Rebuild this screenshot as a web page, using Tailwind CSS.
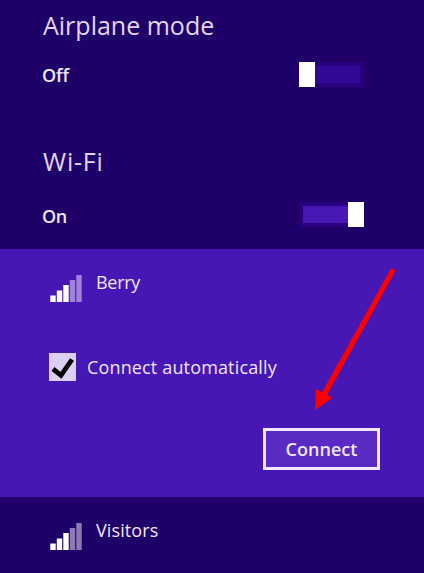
<!DOCTYPE html>
<html lang="en">
<head>
<meta charset="utf-8">
<title>Networks</title>
<script src="https://cdn.jsdelivr.net/npm/@tailwindcss/browser@4"></script>
</head>
<body class="w-[424px] h-[573px] overflow-hidden bg-[#1f0068] text-[#f0e6fc] font-['Open_Sans','Noto_Sans',sans-serif]">
<main class="relative flex flex-col h-[573px] whitespace-nowrap">
  <section class="h-[140px] pt-[7px] pl-[43px] pr-[60px]">
    <h2 class="h-9 leading-9 text-[25px] font-normal text-[#e2d6f2]">Airplane mode</h2>
    <div class="mt-[19px] flex items-center justify-between h-[25px]">
      <span class="pt-0.5 text-[18px] leading-[25px] font-semibold -ml-px tracking-[-0.1px]">Off</span>
      <div class="flex w-[65px] h-[25px] bg-[#280080]"><div class="w-4 h-full bg-white"></div><div class="flex-1 my-1 mr-1 bg-[#310996]"></div></div>
    </div>
  </section>
  <section class="h-[109px] pt-[3px] pl-[43px] pr-[60px]">
    <h2 class="h-9 leading-9 text-[25px] font-normal tracking-[0.8px] text-[#e2d6f2]">Wi-Fi</h2>
    <div class="mt-[23px] flex items-center justify-between h-[25px]">
      <span class="pt-[3px] text-[18px] leading-[25px] font-semibold -ml-px tracking-[-0.4px]">On</span>
      <div class="flex w-[65px] h-[25px] bg-[#280080]"><div class="flex-1 my-1 ml-1 bg-[#4718b4]"></div><div class="w-4 h-full bg-white"></div></div>
    </div>
  </section>
  <section class="h-[248px] bg-[#4617b4] pt-[20px] pl-[50px]">
    <div class="flex h-[33px]">
      <svg class="mt-[6px] mr-[14px] w-8 h-[27px]" viewBox="0 0 32 27" fill="#fff"><path d="M.3 20.500h5.400v6.500H.3zM6.800 15.500h5.400V27H6.800zM13.300 10h5.400v17h-5.400z"/><path fill="#a081db" d="M19.800 5h5.400v22h-5.400zM26.300 0h5.400v27h-5.400z"/></svg>
      <span class="text-[18px] leading-[26px] tracking-[-0.3px]">Berry</span>
    </div>
    <div class="mt-[51px] flex items-center h-7">
      <svg class="-ml-px mr-[11px] w-[27px] h-7" viewBox="0 0 27 28"><path fill="#dccff4" d="M0 0h27v28H0z"/><path d="M4 16 12 22.300 23 6.500" fill="none" stroke="#000" stroke-width="4.800"/></svg>
      <span class="text-[18px] leading-7 tracking-[0.15px]">Connect automatically</span>
    </div>
    <button class="block mt-[47px] ml-[213px] w-[117px] h-[42px] border-[3px] border-[#f3e8fc] bg-[#5a2ac5] text-[18px] font-semibold leading-9 tracking-[0.05px]">Connect</button>
  </section>
  <section class="h-[76px] pt-[20px] pl-[50px]">
    <div class="flex h-[33px]">
      <svg class="mt-[6px] mr-[14px] w-8 h-[27px]" viewBox="0 0 32 27" fill="#fff"><path d="M.3 20.500h5.400v6.500H.3zM6.800 15.500h5.400V27H6.800zM13.300 10h5.400v17h-5.400z"/><path fill="#8e78b6" d="M19.800 5h5.400v22h-5.400zM26.300 0h5.400v27h-5.400z"/></svg>
      <span class="text-[18px] leading-[26px] tracking-[0.1px]">Visitors</span>
    </div>
  </section>
  <svg class="absolute left-[310px] top-[264px] w-[90px] h-[150px]" viewBox="310 264 90 150" fill="#f00"><path d="M391.300 268 395.700 270.500 327 394.800 332.500 397.800 315 410 316 389 322 392.300z"/></svg>
</main>
</body>
</html>
